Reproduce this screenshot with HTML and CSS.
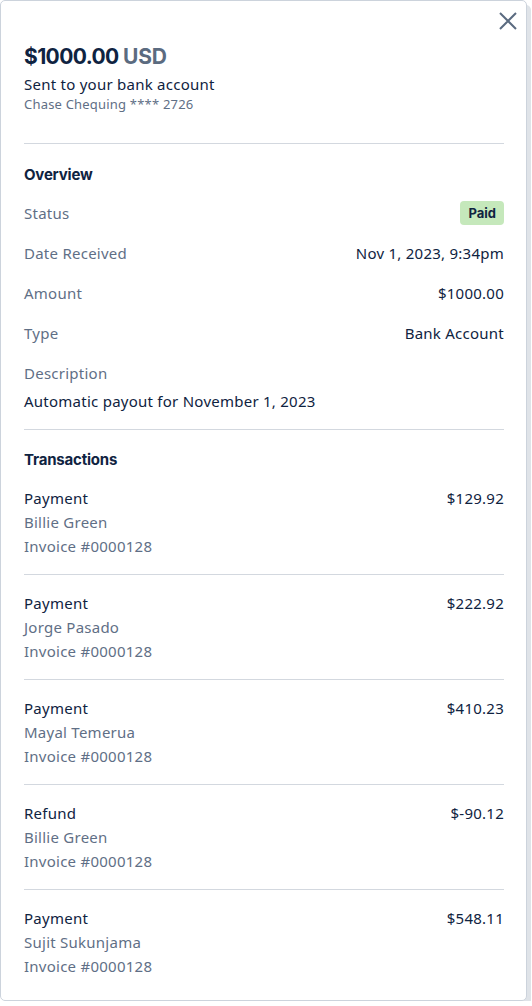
FILE: index.html
```html
<!DOCTYPE html>
<html lang="en">
<head>
<meta charset="utf-8">
<title>Payout</title>
<link rel="stylesheet" href="styles.css">
</head>
<body>
<div class="card">
  <button class="close" aria-label="Close">
    <svg width="20" height="20" viewBox="0 0 20 20"><path d="M2 2 L18 18 M18 2 L2 18" stroke="#5b6b80" stroke-width="2" fill="none"/></svg>
  </button>
  <header class="head">
    <h1 class="amount">$1000.00 <span class="cur">USD</span></h1>
    <p class="sent">Sent to your bank account</p>
    <p class="acct">Chase Chequing **** 2726</p>
  </header>
  <section class="section">
    <h2 class="title">Overview</h2>
    <div class="row"><span class="label">Status</span><span class="badge">Paid</span></div>
    <div class="row"><span class="label">Date Received</span><span class="value">Nov 1, 2023, 9:34pm</span></div>
    <div class="row"><span class="label">Amount</span><span class="value">$1000.00</span></div>
    <div class="row"><span class="label">Type</span><span class="value">Bank Account</span></div>
    <div class="desc"><span class="label">Description</span><span class="value">Automatic payout for November 1, 2023</span></div>
  </section>
  <section class="section tx-section">
    <h2 class="title">Transactions</h2>
    <div class="tx">
      <div class="tx-main"><span class="value">Payment</span><span class="label">Billie Green</span><span class="label">Invoice #0000128</span></div>
      <span class="value">$129.92</span>
    </div>
    <div class="tx">
      <div class="tx-main"><span class="value">Payment</span><span class="label">Jorge Pasado</span><span class="label">Invoice #0000128</span></div>
      <span class="value">$222.92</span>
    </div>
    <div class="tx">
      <div class="tx-main"><span class="value">Payment</span><span class="label">Mayal Temerua</span><span class="label">Invoice #0000128</span></div>
      <span class="value">$410.23</span>
    </div>
    <div class="tx">
      <div class="tx-main"><span class="value">Refund</span><span class="label">Billie Green</span><span class="label">Invoice #0000128</span></div>
      <span class="value">$-90.12</span>
    </div>
    <div class="tx">
      <div class="tx-main"><span class="value">Payment</span><span class="label">Sujit Sukunjama</span><span class="label">Invoice #0000128</span></div>
      <span class="value">$548.11</span>
    </div>
  </section>
</div>
</body>
</html>
```
FILE: styles.css
```css
* { box-sizing: border-box; }
html, body { margin: 0; padding: 0; background: #fff; }
body {
  font-family: "Noto Sans", "Open Sans", sans-serif;
  color: #0f2341;
  font-size: 15px;
  letter-spacing: 0.25px;
}
.card {
  position: relative;
  width: 527px;
  height: 1001px;
  border: 1px solid #ccd3dc;
  border-radius: 5px;
  box-shadow: 4px 5px 0 #dfe3e8;
  padding: 0 22px 0 23px;
  background: #fff;
}
.close {
  position: absolute;
  top: 10px;
  right: 8px;
  border: 0;
  background: none;
  padding: 0;
  width: 20px;
  height: 20px;
  cursor: pointer;
}
.close svg { display: block; }
.head {
  padding-top: 43px;
  padding-bottom: 30px;
  border-bottom: 1px solid #d3d8df;
}
.amount {
  margin: 0;
  font-family: Inter, "Liberation Sans", sans-serif;
  font-weight: 700;
  font-size: 21px;
  line-height: 26px;
  letter-spacing: -0.6px;
  color: #0f2341;
}
.cur { color: #5b6b80; letter-spacing: -0.2px; }
.sent { margin: 3px 0 0; font-size: 15px; line-height: 22px; }
.acct { margin: 0; font-size: 13px; line-height: 18px; color: #5f6f86; letter-spacing: 0.2px; }
.section {
  border-bottom: 1px solid #d3d8df;
  padding-top: 20px;
  padding-bottom: 16px;
}
.tx-section { border-bottom: 0; padding-bottom: 0; padding-top: 19px; }
.title {
  margin: 0 0 7px;
  font-family: Inter, "Liberation Sans", sans-serif;
  font-weight: 700;
  font-size: 15px;
  line-height: 22px;
  letter-spacing: -0.2px;
  color: #0f2341;
}
.row {
  display: flex;
  justify-content: space-between;
  align-items: center;
  height: 40px;
}
.label { color: #5f6f86; line-height: 24px; }
.value { color: #0f2341; line-height: 24px; }
.badge {
  font-family: Inter, "Liberation Sans", sans-serif;
  font-weight: 700;
  font-size: 13px;
  line-height: 24px;
  padding: 0 8px;
  border-radius: 4px;
  background: #c5e8bb;
  color: #0f2341;
  letter-spacing: 0;
}
.desc {
  display: flex;
  flex-direction: column;
  padding-top: 8px;
  gap: 4px;
}
.tx {
  display: flex;
  justify-content: space-between;
  align-items: flex-start;
  padding: 16px 0 16px;
  border-bottom: 1px solid #d3d8df;
}
.tx:first-of-type { padding-top: 8px; }
.tx:last-child { border-bottom: 0; }
.tx-main { display: flex; flex-direction: column; }
```
